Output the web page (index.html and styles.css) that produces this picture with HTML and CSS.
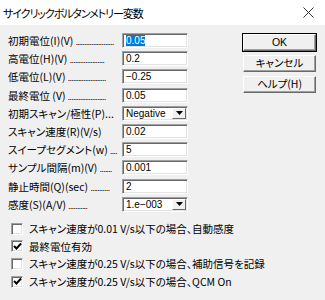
FILE: index.html
```html
<!DOCTYPE html>
<html lang="ja">
<head>
  <meta charset="UTF-8" />
  <title>サイクリックボルタンメトリー変数</title>
  <link rel="stylesheet" href="styles.css">
</head>
<body>
  <div class="window">
    <div class="titlebar">
      <span class="title">サイクリックボルタンメトリー変数</span>
      <svg class="close" width="11" height="11" viewBox="0 0 11 11"><path d="M0.5 0.5 L10.5 10.5 M10.5 0.5 L0.5 10.5" stroke="#333" stroke-width="1" fill="none"/></svg>
    </div>
    <div class="content">
      <div class="main">
        <div class="form">
          <div class="row"><span class="lbl">初期電位(I)(V) <span class="dots">......................</span></span><div class="edit"><span class="sel">0.05</span></div></div>
          <div class="row"><span class="lbl">高電位(H)(V) <span class="dots">....................</span></span><div class="edit">0.2</div></div>
          <div class="row"><span class="lbl">低電位(L)(V) <span class="dots">......................</span></span><div class="edit">−0.25</div></div>
          <div class="row"><span class="lbl">最終電位 (V) <span class="dots">......................</span></span><div class="edit">0.05</div></div>
          <div class="row"><span class="lbl">初期スキャン/極性(P)...</span><div class="combo"><span class="val">Negative</span><span class="drop"><svg width="7" height="4" viewBox="0 0 7 4"><path d="M0 0 H7 L3.5 4 Z" fill="#000"/></svg></span></div></div>
          <div class="row"><span class="lbl">スキャン速度(R)(V/s)</span><div class="edit">0.02</div></div>
          <div class="row"><span class="lbl">スイープセグメント(w) <span class="dots">....</span></span><div class="edit">5</div></div>
          <div class="row"><span class="lbl">サンプル間隔(m)(V) <span class="dots">.......</span></span><div class="edit">0.001</div></div>
          <div class="row"><span class="lbl">静止時間(Q)(sec) <span class="dots">...........</span></span><div class="edit">2</div></div>
          <div class="row"><span class="lbl">感度(S)(A/V) <span class="dots">...........</span></span><div class="combo"><span class="val">1.e−003</span><span class="drop"><svg width="7" height="4" viewBox="0 0 7 4"><path d="M0 0 H7 L3.5 4 Z" fill="#000"/></svg></span></div></div>
        </div>
        <div class="buttons">
          <div class="btn default">OK</div>
          <div class="btn">キャンセル</div>
          <div class="btn">ヘルプ(H)</div>
        </div>
      </div>
      <div class="checks">
        <div class="check"><span class="box"></span>スキャン速度が0.01 V/s以下の場合、自動感度</div>
        <div class="check"><span class="box"><svg width="9" height="9" viewBox="0 0 9 9"><path d="M1 4 L3.5 6.5 L8 1.5" stroke="#000" stroke-width="2" fill="none"/></svg></span>最終電位有効</div>
        <div class="check"><span class="box"></span>スキャン速度が0.25 V/s以下の場合、補助信号を記録</div>
        <div class="check"><span class="box"><svg width="9" height="9" viewBox="0 0 9 9"><path d="M1 4 L3.5 6.5 L8 1.5" stroke="#000" stroke-width="2" fill="none"/></svg></span>スキャン速度が0.25 V/s以下の場合、QCM On</div>
      </div>
    </div>
  </div>
</body>
</html>
```

FILE: styles.css
```css
body {
  margin: 0;
  background: #f0f0f0;
  font-family: "Noto Sans CJK JP", "Noto Sans", sans-serif;
  font-feature-settings: "palt";
  color: #000;
}
.window {
  width: 325px;
  height: 300px;
  display: flex;
  flex-direction: column;
}
.titlebar {
  height: 25px;
  background: #fff;
  display: flex;
  align-items: center;
  justify-content: space-between;
  padding: 0 11px 0 3px;
}
.title {
  font-size: 11px;
  letter-spacing: -1.1px;
  color: #000;
}
.content {
  padding: 8px 8px 0 8px;
}
.main {
  display: flex;
}
.form {
  width: 180px;
  display: flex;
  flex-direction: column;
  gap: 3.2px;
}
.row {
  height: 15px;
  display: flex;
  align-items: center;
  justify-content: space-between;
}
.lbl {
  font-size: 10.5px;
  white-space: nowrap;
  overflow: hidden;
  width: 113px;
}
.dots {
  font-size: 8px;
  letter-spacing: -0.5px;
}
.edit, .combo {
  width: 66px;
  height: 15px;
  box-sizing: border-box;
  background: #fff;
  border-top: 1px solid #a0a0a0;
  border-left: 1px solid #a0a0a0;
  border-right: 1px solid #fff;
  border-bottom: 1px solid #fff;
  box-shadow: inset 1px 1px 0 #696969, inset -1px -1px 0 #e3e3e3;
  font-size: 10px;
  line-height: 13px;
  padding-left: 3px;
  font-feature-settings: normal;
  font-family: "Liberation Sans", sans-serif;
}
.sel {
  background: #0078d7;
  color: #fff;
}
.combo {
  display: flex;
  justify-content: space-between;
  padding-right: 1px;
}
.drop {
  width: 14px;
  height: 11px;
  margin-top: 1px;
  box-sizing: border-box;
  background: #f0f0f0;
  border-top: 1px solid #fff;
  border-left: 1px solid #fff;
  border-right: 1px solid #696969;
  border-bottom: 1px solid #696969;
  display: flex;
  align-items: center;
  justify-content: center;
}
.buttons {
  margin-left: 55px;
  padding-top: 1px;
  display: flex;
  flex-direction: column;
  gap: 4px;
}
.btn {
  width: 73px;
  height: 17px;
  box-sizing: border-box;
  border-top: 1px solid #fff;
  border-left: 1px solid #fff;
  border-right: 1px solid #696969;
  border-bottom: 1px solid #696969;
  box-shadow: inset -1px -1px 0 #a0a0a0;
  font-size: 10.5px;
  text-align: center;
  line-height: 14px;
}
.btn.default {
  outline: 1px solid #000;
  outline-offset: 0;
  font-family: "Liberation Sans", sans-serif;
}
.checks {
  margin-top: 8px;
  display: flex;
  flex-direction: column;
}
.check {
  height: 17.7px;
  display: flex;
  align-items: center;
  font-size: 10.5px;
  white-space: nowrap;
}
.box {
  width: 12px;
  height: 12px;
  box-sizing: border-box;
  margin: 0 6px 0 3px;
  background: #fff;
  border-top: 1px solid #a0a0a0;
  border-left: 1px solid #a0a0a0;
  border-right: 1px solid #fff;
  border-bottom: 1px solid #fff;
  box-shadow: inset 1px 1px 0 #696969, inset -1px -1px 0 #e3e3e3;
  display: flex;
  align-items: center;
  justify-content: center;
}
```
